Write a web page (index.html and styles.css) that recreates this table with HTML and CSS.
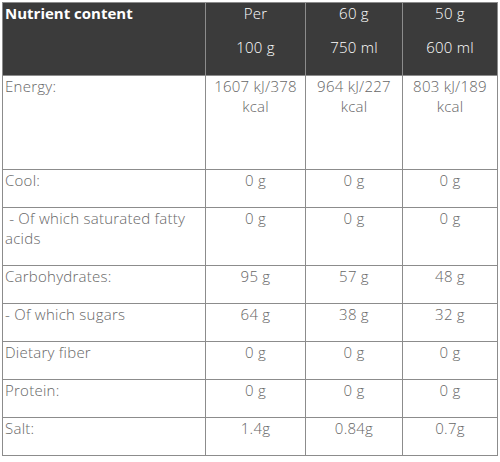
FILE: index.html
```html
<!DOCTYPE html>
<html>
<head>
<meta charset="utf-8">
<link rel="stylesheet" href="styles.css">
</head>
<body>
<table class="nutri">
  <colgroup>
    <col class="c1"><col class="c2"><col class="c3"><col class="c4">
  </colgroup>
  <thead>
    <tr class="head">
      <th class="label">Nutrient content</th>
      <th><div class="l1">Per</div><div class="l2">100 g</div></th>
      <th><div class="l1">60 g</div><div class="l2">750 ml</div></th>
      <th><div class="l1">50 g</div><div class="l2">600 ml</div></th>
    </tr>
  </thead>
  <tbody>
    <tr class="r-energy"><td class="label">Energy:</td><td>1607 kJ/378 kcal</td><td>964 kJ/227 kcal</td><td>803 kJ/189 kcal</td></tr>
    <tr class="r-std"><td class="label">Cool:</td><td>0 g</td><td>0 g</td><td>0 g</td></tr>
    <tr class="r-tall"><td class="label">&nbsp;- Of which saturated fatty acids</td><td>0 g</td><td>0 g</td><td>0 g</td></tr>
    <tr class="r-std"><td class="label">Carbohydrates:</td><td>95 g</td><td>57 g</td><td>48 g</td></tr>
    <tr class="r-std"><td class="label">- Of which sugars</td><td>64 g</td><td>38 g</td><td>32 g</td></tr>
    <tr class="r-std"><td class="label">Dietary fiber</td><td>0 g</td><td>0 g</td><td>0 g</td></tr>
    <tr class="r-std"><td class="label">Protein:</td><td>0 g</td><td>0 g</td><td>0 g</td></tr>
    <tr class="r-std"><td class="label">Salt:</td><td>1.4g</td><td>0.84g</td><td>0.7g</td></tr>
  </tbody>
</table>
</body>
</html>
```

FILE: styles.css
```css
html, body {
  margin: 0;
  padding: 0;
  background: #ffffff;
}
body {
  padding: 2px 4px 4px 2px;
  font-family: "Open Sans", "DejaVu Sans", sans-serif;
  font-weight: 300;
  font-size: 15px;
  letter-spacing: 0.25px;
  line-height: 20px;
  color: #666666;
}
.nutri {
  border-collapse: collapse;
  table-layout: fixed;
  width: 495px;
}
.c1 { width: 203px; }
.c2 { width: 100px; }
.c3 { width: 97px; }
.c4 { width: 95px; }
.nutri th, .nutri td {
  border: 1px solid #8c8c8c;
  vertical-align: top;
  text-align: center;
  padding: 0 3px 0 3px;
}
.nutri .label {
  text-align: left;
  padding-left: 2px;
}
.head th {
  background: #3b3b3b;
  color: #ffffff;
  font-weight: 300;
  height: 73px;
  padding-top: 0;
  box-sizing: border-box;
}
.head th.label {
  font-weight: 700;
  letter-spacing: 0;
}
.l2 { margin-top: 14px; }
.r-energy td { height: 94px; box-sizing: border-box; }
.r-std td { height: 38px; box-sizing: border-box; }
.r-tall td { height: 58px; box-sizing: border-box; }
```
